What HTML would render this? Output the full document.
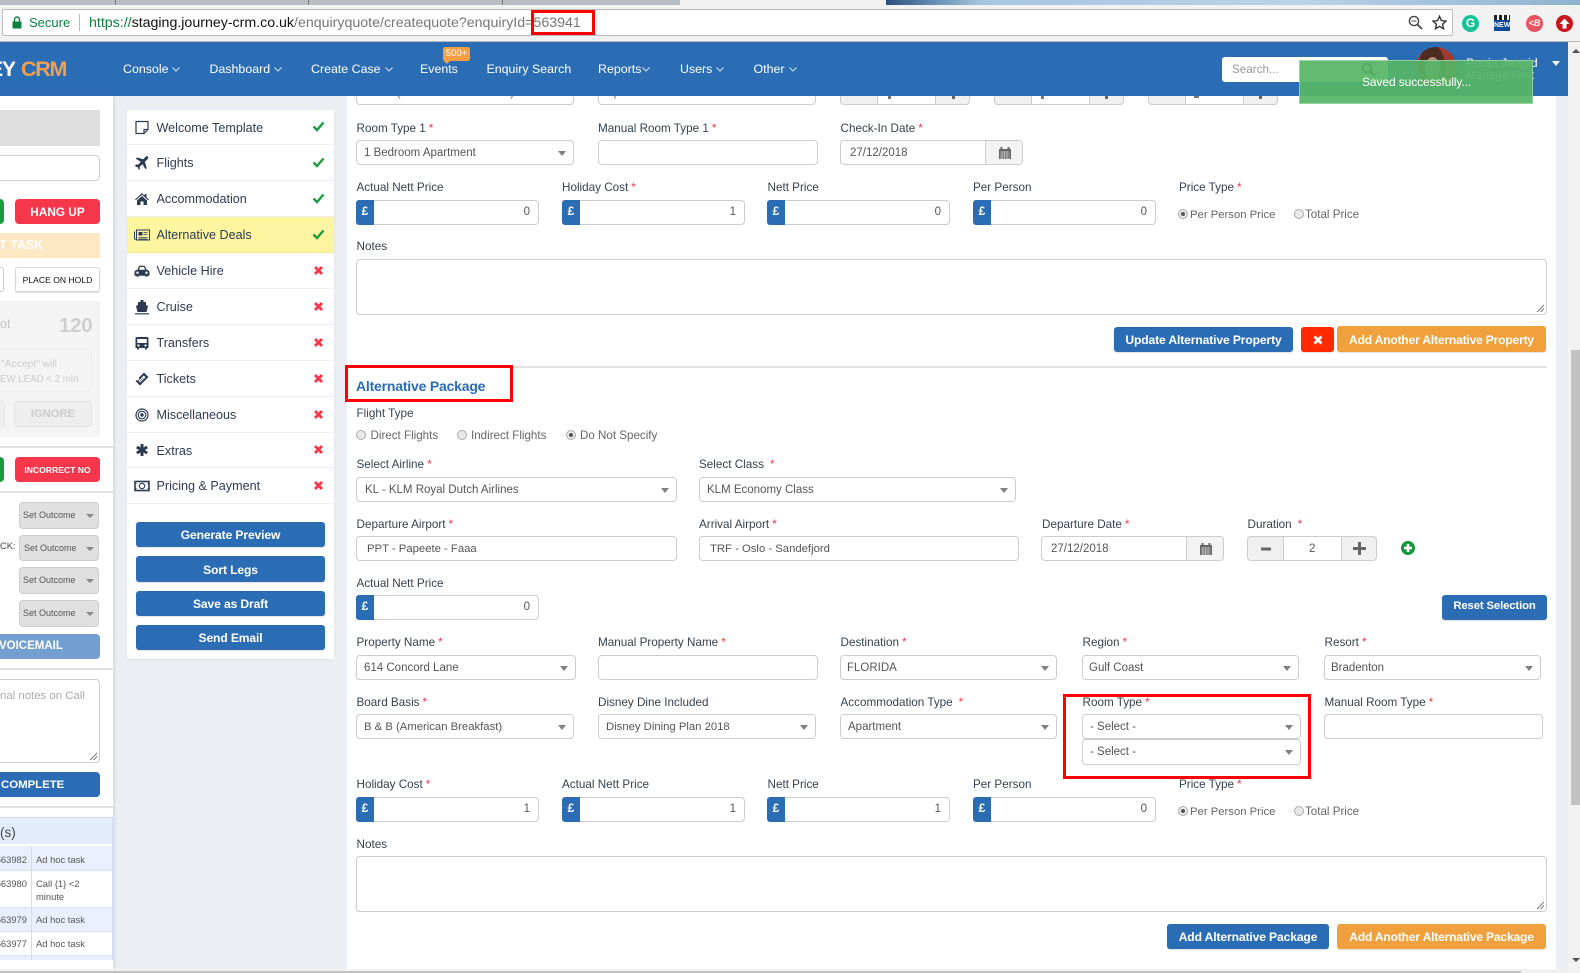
<!DOCTYPE html>
<html><head><meta charset="utf-8"><title>Journey CRM</title>
<style>
html,body{margin:0;padding:0}
body{width:1580px;height:973px;overflow:hidden;position:relative;background:#ebeef3;font-family:"Liberation Sans",sans-serif;color:#3c4858}
div,span,b,u,svg{box-sizing:border-box}
.a{position:absolute;white-space:nowrap}
.l{position:absolute;white-space:nowrap;font-size:11.7px;line-height:16px;height:16px;color:#36424f;margin-top:1px}
.l i{color:#f4364c;font-style:normal;margin-left:3px}
.v{position:absolute;white-space:nowrap;font-size:11.6px;line-height:16px;color:#666;margin-top:1px}
.f{position:absolute;background:#fff;border:1px solid #ccc;border-radius:4px;height:25px;line-height:25px;font-size:11.5px;color:#555;white-space:nowrap;padding-left:8px}
.s:after{content:"";position:absolute;right:7px;top:10px;border:4.5px solid transparent;border-top:5px solid #808080;border-bottom:0}
.g b{position:absolute;left:-1px;top:-1px;bottom:-1px;width:18px;background:#2b6db5;border-radius:3px 0 0 3px;color:#fff;font-size:12px;text-align:center;line-height:23px}
.g span{position:absolute;right:8px;top:-1px}
.d u{position:absolute;right:0;top:0;bottom:0;width:37px;background:#f3f3f3;border-left:1px solid #ccc;border-radius:0 3px 3px 0;text-decoration:none}
.d svg{position:absolute;left:12px;top:5px}
.r{position:absolute;width:10px;height:10px;border-radius:50%;background:#e9e9e9;border:1px solid #aaa}
.r.on:after{content:"";position:absolute;left:2px;top:2px;width:4px;height:4px;border-radius:50%;background:#555}
.b{position:absolute;background:#2b6db5;color:#fff;font-weight:bold;text-align:center;border-radius:3px;font-size:12.1px;white-space:nowrap;height:25px;line-height:26px;letter-spacing:-.12px;box-shadow:0 1px 1px rgba(0,0,0,.12)}
.o{background:#f0a03c}
.rb{position:absolute;border:3px solid #f00;background:transparent}
.ta{position:absolute;background:#fff;border:1px solid #ccc;border-radius:4px}
.ta svg{position:absolute;right:1px;bottom:1px}
.n{position:absolute;color:#fff;font-size:12.4px;line-height:16px;top:61px;white-space:nowrap}
.n svg{margin-left:4px;vertical-align:1px}
.it{position:absolute;left:127px;width:207px;background:#fff;border-bottom:1px solid #eef0f3}
.it span{position:absolute;left:29.5px;top:50%;margin-top:-8.5px;line-height:18px;font-size:12.6px;color:#2d3b52;white-space:nowrap}
.it .ic{position:absolute;left:7px;top:50%;margin-top:-8px}
.it .m{position:absolute;left:185px;top:50%;margin-top:-6px}
.so{position:absolute;left:19px;width:80px;background:#e0e0e0;border:1px solid #ccc;border-radius:4px;font-size:9px;line-height:25px;color:#555;padding-left:3px}
.so:after{content:"";position:absolute;right:4px;top:11px;border:4.5px solid transparent;border-top:4.5px solid #888;border-bottom:0}
.td{position:absolute;font-size:9.4px;line-height:13px;color:#555;white-space:nowrap}
</style></head><body>

<!-- browser chrome -->
<div class="a" style="left:0;top:0;width:1580px;height:42px;background:#f2f2f2;border-bottom:1px solid #bbb"></div>
<div class="a" style="left:0;top:0;width:680px;height:5px;background:#b9bec5"></div>
<div class="a" style="left:115px;top:0;width:1px;height:5px;background:#777"></div>
<div class="a" style="left:308px;top:0;width:1px;height:5px;background:#777"></div>
<div class="a" style="left:502px;top:0;width:1px;height:5px;background:#777"></div>
<div class="a" style="left:886px;top:0;width:694px;height:5px;background:linear-gradient(90deg,#2a4f7e 0,#5f87ad 6%,#a9c6df 14%,#b9d2e6 60%,#90b2cf 100%)"></div>
<div class="a" style="left:2px;top:9px;width:1451px;height:27px;background:#fff;border:1px solid #bbb;border-radius:2px"></div>
<svg class="a" style="left:12px;top:16px" width="10" height="13" viewBox="0 0 10 13"><path d="M2.5 6V3.5a2.5 2.5 0 0 1 5 0V6" fill="none" stroke="#0b8043" stroke-width="1.4"/><rect x="0.5" y="5.5" width="9" height="7" fill="#0b8043"/></svg>
<div class="a" style="left:29px;top:15px;font-size:13px;line-height:16px;color:#0b8043">Secure</div>
<div class="a" style="left:79px;top:14px;width:1px;height:17px;background:#bbb"></div>
<div class="a" style="left:89px;top:15px;font-size:14.2px;line-height:16px;color:#777"><span style="color:#0b8043">https://</span><span style="color:#111">staging.journey-crm.co.uk</span>/enquiryquote/createquote?enquiryId=563941</div>
<div class="rb" style="left:531px;top:10px;width:64px;height:25px"></div>
<svg class="a" style="left:1408px;top:15px" width="15" height="15" viewBox="0 0 15 15"><circle cx="6" cy="6" r="4.6" fill="none" stroke="#444" stroke-width="1.4"/><path d="M9.5 9.5L14 14" stroke="#444" stroke-width="1.8"/><path d="M3.6 6h4.8" stroke="#444"/></svg>
<svg class="a" style="left:1432px;top:15px" width="15" height="15" viewBox="0 0 24 24"><path d="M12 2l3 7 7.5.7-5.7 5 1.7 7.3L12 18.2 5.500 22l1.700-7.300-5.700-5L9 9z" fill="none" stroke="#333" stroke-width="2.200"/></svg>
<div class="a" style="left:1462px;top:15px;width:17px;height:17px;border-radius:50%;background:#15c39a;color:#fff;font-size:12px;font-weight:bold;line-height:17px;text-align:center">G</div>
<div class="a" style="left:1494px;top:15px;width:16px;height:16px;background:#0d4a9c;color:#fff;font-size:7px;font-weight:bold;line-height:22px;text-align:center">NEW</div>
<div class="a" style="left:1494px;top:15px;width:16px;height:5px;background:repeating-linear-gradient(90deg,#222 0 3px,#fff 3px 5px)"></div>
<div class="a" style="left:1526px;top:15px;width:17px;height:17px;border-radius:50%;background:#e85462;color:#fff;font-size:9px;font-style:italic;font-weight:bold;line-height:17px;text-align:center">&lt;B</div>
<div class="a" style="left:1556px;top:15px;width:17px;height:17px;border-radius:50%;background:#c8161d"></div>
<svg class="a" style="left:1559px;top:18px" width="11" height="11" viewBox="0 0 11 11"><path d="M5.500 0.500L10.500 6H7.500V10.500H3.500V6H0.500z" fill="#fff"/></svg>

<!-- nav -->
<div class="a" style="left:0;top:42px;width:1568px;height:54px;background:#2b6db5"></div>
<div class="a" style="left:0;top:56px;width:15px;height:26px;overflow:hidden;font-size:21.5px;line-height:26px;font-weight:bold;color:#fff"><span style="position:absolute;right:0;letter-spacing:-1.2px">EY</span></div>
<div class="a" style="left:21px;top:56px;font-size:21.5px;line-height:26px;font-weight:bold;color:#f2a04d;letter-spacing:-1.3px">CRM</div>
<div class="n" style="left:123px">Console<svg width="8" height="5" viewBox="0 0 8 5"><path d="M.5.500l3.500 3.500 3.500-3.500" fill="none" stroke="#d5e2f2"/></svg></div>
<div class="n" style="left:209.500px">Dashboard<svg width="8" height="5" viewBox="0 0 8 5"><path d="M.5.500l3.500 3.500 3.500-3.500" fill="none" stroke="#d5e2f2"/></svg></div>
<div class="n" style="left:311px">Create Case<svg width="8" height="5" viewBox="0 0 8 5"><path d="M.5.500l3.500 3.500 3.500-3.500" fill="none" stroke="#d5e2f2"/></svg></div>
<div class="n" style="left:420px">Events</div>
<div class="n" style="left:486.500px">Enquiry Search</div>
<div class="n" style="left:598px">Reports<svg style="margin-left:1px" width="8" height="5" viewBox="0 0 8 5"><path d="M.5.500l3.500 3.500 3.500-3.500" fill="none" stroke="#d5e2f2"/></svg></div>
<div class="n" style="left:680px">Users<svg width="8" height="5" viewBox="0 0 8 5"><path d="M.5.500l3.500 3.500 3.500-3.500" fill="none" stroke="#d5e2f2"/></svg></div>
<div class="n" style="left:753.500px">Other<svg width="8" height="5" viewBox="0 0 8 5"><path d="M.5.500l3.500 3.500 3.500-3.500" fill="none" stroke="#d5e2f2"/></svg></div>
<div class="a" style="left:443px;top:47px;width:27px;height:14px;background:#f59f42;border-radius:2px;color:#fff;font-size:9.500px;line-height:14px;text-align:center">500+</div>
<div class="a" style="left:444px;top:61px;border:3px solid transparent;border-top:3px solid #f59f42;border-bottom:0"></div>
<div class="a" style="left:1222px;top:57px;width:166px;height:25px;background:#fff;border-radius:3px;font-size:11.700px;line-height:25px;color:#999;padding-left:10px">Search...</div>
<svg class="a" style="left:1361px;top:62px" width="15" height="15" viewBox="0 0 15 15"><circle cx="6" cy="6" r="4.500" fill="none" stroke="#444" stroke-width="2"/><path d="M9.500 9.500L14 14" stroke="#444" stroke-width="2.400"/></svg>
<div class="a" style="left:1416px;top:47px;width:40px;height:40px;border-radius:50%;overflow:hidden;background:#a2392a"><div class="a" style="left:3px;top:-2px;width:26px;height:44px;border-radius:50%;background:#4b2d22"></div><div class="a" style="left:9px;top:10px;width:15px;height:24px;border-radius:50%;background:#b58f78"></div></div>
<div class="a" style="left:1466px;top:55px;font-size:12.400px;line-height:16px;color:#fff">Pooja Jangid</div>
<div class="a" style="left:1466px;top:68px;font-size:11.700px;line-height:16px;color:#e6eef8">Management</div>
<div class="a" style="left:1552px;top:61px;border:4px solid transparent;border-top:5px solid #fff;border-bottom:0"></div>

<!-- sidebar -->
<div class="a" style="left:0;top:96px;width:113px;height:873px;background:#fff;box-shadow:2px 0 3px rgba(0,0,0,.08)"></div>
<div class="a" style="left:0;top:110px;width:100px;height:36px;background:#dedede"></div>
<div class="a" style="left:-5px;top:155px;width:105px;height:26px;background:#fff;border:1px solid #ccc;border-radius:4px"></div>
<div class="a" style="left:-5px;top:199px;width:9px;height:25px;background:#1a9c3e;border-radius:4px"></div>
<div class="a" style="left:15px;top:199px;width:85px;height:25px;background:#f6364a;border-radius:4px;color:#fff;font-weight:bold;font-size:11.8px;line-height:26px;text-align:center">HANG UP</div>
<div class="a" style="left:0;top:233px;width:100px;height:25px;background:#fde8c3;color:#fff;font-weight:bold;font-size:12.500px;line-height:25px;overflow:hidden"><span style="position:absolute;left:-1px">T TASK</span></div>
<div class="a" style="left:-5px;top:267px;width:9px;height:25px;background:#fff;border:1px solid #ccc;border-radius:3px"></div>
<div class="a" style="left:15px;top:267px;width:85px;height:25px;background:#fff;border:1px solid #d8d8d8;border-radius:3px;color:#111;font-size:8.6px;line-height:24px;text-align:center;box-shadow:0 1px 1px rgba(0,0,0,.15)">PLACE ON HOLD</div>
<div class="a" style="left:0;top:301px;width:100px;height:136px;background:#f4f4f4"></div>
<div class="a" style="left:0;top:316px;font-size:12.500px;line-height:16px;color:#c4c4c4">ot</div>
<div class="a" style="left:59px;top:313px;font-size:20.5px;font-weight:bold;line-height:26px;color:#cfcfcf;letter-spacing:-.3px">120</div>
<div class="a" style="left:-6px;top:348px;width:98px;height:44px;border:1px solid #ebebeb;border-radius:6px"></div>
<div class="a" style="left:1px;top:357px;font-size:10.300px;line-height:16px;color:#ccc">"Accept" will</div>
<div class="a" style="left:0;top:372px;width:90px;overflow:hidden;font-size:9.700px;line-height:16px;color:#ccc">EW LEAD &lt; 2 min</div>
<div class="a" style="left:-5px;top:401px;width:10px;height:26px;background:#eee;border:1px solid #e4e4e4;border-radius:3px"></div>
<div class="a" style="left:14px;top:401px;width:78px;height:26px;background:#eee;border:1px solid #e4e4e4;border-radius:3px;color:#ccc;font-size:11.2px;font-weight:bold;line-height:25px;text-align:center">IGNORE</div>
<div class="a" style="left:0;top:446px;width:113px;height:2px;background:#e2e2e2"></div>
<div class="a" style="left:-5px;top:457px;width:9px;height:25px;background:#1a9c3e;border-radius:4px"></div>
<div class="a" style="left:15px;top:457px;width:85px;height:25px;background:#f6364a;border-radius:4px;color:#fff;font-weight:bold;font-size:8.6px;line-height:26px;text-align:center">INCORRECT NO</div>
<div class="a" style="left:0;top:491px;width:113px;height:2px;background:#e2e2e2"></div>
<div class="so" style="top:502px;height:27px">Set Outcome</div>
<div class="a" style="left:0;top:538px;font-size:9.400px;line-height:16px;color:#444">CK:</div>
<div class="so" style="top:535px;height:26px;padding-left:4px;line-height:24px">Set Outcome</div>
<div class="so" style="top:567px;height:27px">Set Outcome</div>
<div class="so" style="top:600px;height:27px">Set Outcome</div>
<div class="a" style="left:0;top:634px;width:100px;height:25px;background:#739fd0;border-radius:0 4px 4px 0;color:#fff;font-weight:bold;font-size:11.5px;line-height:25px;overflow:hidden"><span style="position:absolute;left:-1px">VOICEMAIL</span></div>
<div class="a" style="left:0;top:668px;width:113px;height:2px;background:#e2e2e2"></div>
<div class="ta" style="left:-5px;top:679px;width:105px;height:84px"><svg width="9" height="9" viewBox="0 0 9 9"><path d="M1 8L8 1M4.500 8L8 4.500" stroke="#777"/></svg></div>
<div class="a" style="left:0;top:688px;font-size:11.4px;line-height:16px;color:#aaa">nal notes on Call</div>
<div class="a" style="left:0;top:772px;width:100px;height:25px;background:#2b6db5;border-radius:0 4px 4px 0;color:#fff;font-weight:bold;font-size:11.4px;line-height:26px"><span style="position:absolute;left:1px">COMPLETE</span></div>
<div class="a" style="left:0;top:806px;width:113px;height:2px;background:#e2e2e2"></div>
<div class="a" style="left:0;top:817px;width:113px;height:27px;background:#e3ecfb;border-top:1px solid #d0def5"></div>
<div class="a" style="left:0;top:824px;font-size:13.500px;line-height:18px;color:#444">(s)</div>
<div class="a" style="left:0;top:846px;width:113px;height:24px;background:#e9f0fc"></div>
<div class="a" style="left:0;top:907px;width:113px;height:24px;background:#e9f0fc"></div>
<div class="a" style="left:0;top:870px;width:113px;height:1px;background:#d6e2f6"></div>
<div class="a" style="left:0;top:907px;width:113px;height:1px;background:#d6e2f6"></div>
<div class="a" style="left:0;top:931px;width:113px;height:1px;background:#d6e2f6"></div>
<div class="a" style="left:0;top:955px;width:113px;height:5px;background:#e9f0fc;border-top:1px solid #d6e2f6"></div>
<div class="a" style="left:31px;top:846px;width:1px;height:114px;background:#d0def5"></div>
<div class="a" style="left:112px;top:817px;width:1px;height:143px;background:#d0def5"></div>
<div class="td" style="left:0;top:853px;width:27px;overflow:hidden;direction:rtl">563982</div>
<div class="td" style="left:36px;top:853px">Ad hoc task</div>
<div class="td" style="left:0;top:877px;width:27px;overflow:hidden;direction:rtl">563980</div>
<div class="td" style="left:36px;top:877px">Call {1} &lt;2</div>
<div class="td" style="left:36px;top:890px">minute</div>
<div class="td" style="left:0;top:913px;width:27px;overflow:hidden;direction:rtl">563979</div>
<div class="td" style="left:36px;top:913px">Ad hoc task</div>
<div class="td" style="left:0;top:937px;width:27px;overflow:hidden;direction:rtl">563977</div>
<div class="td" style="left:36px;top:937px">Ad hoc task</div>

<!-- wizard column -->
<div class="a" style="left:127px;top:110px;width:207px;height:549px;background:#fff;box-shadow:0 1px 2px rgba(0,0,0,.06)"></div>
<div class="it" style="top:110px;height:35px"><svg class="ic" width="16" height="16" viewBox="0 0 16 16"><path d="M2 2.500h12v8l-4 4H2z" fill="none" stroke="#2d3b52" stroke-width="1.200"/><path d="M14 10.500h-4v4" fill="none" stroke="#2d3b52" stroke-width="1.200"/></svg><span>Welcome Template</span><svg class="m" width="13" height="11" viewBox="0 0 13 11"><path d="M1.500 5.500L5 9l6.500-7.500" fill="none" stroke="#1a9c3e" stroke-width="2.400"/></svg></div>
<div class="it" style="top:145px;height:36px"><svg class="ic" width="16" height="16" viewBox="0 0 16 16"><path d="M14.500 1.500c-1-.8-2.300-.3-3.200.6L9.200 4.300 3 2.500 1.800 3.700l5 3-2.800 3-2-.4L1 11.200l2.700 1.200L5 15l.9-1-.4-2 3-2.800 3 5 1.200-1.200-1.800-6.200 2.200-2.100c.900-.9 1.400-2.200.9-3.200z" fill="#2d3b52"/></svg><span>Flights</span><svg class="m" width="13" height="11" viewBox="0 0 13 11"><path d="M1.500 5.500L5 9l6.500-7.500" fill="none" stroke="#1a9c3e" stroke-width="2.400"/></svg></div>
<div class="it" style="top:181px;height:36px"><svg class="ic" width="16" height="16" viewBox="0 0 16 16"><path d="M8 2L1 8.500l.8.800L8 3.700l6.200 5.600.8-.8-2.500-2.300V3h-2v1.700z" fill="#2d3b52"/><path d="M3 9.500L8 5l5 4.500V14H9.500v-3.500h-3V14H3z" fill="#2d3b52"/></svg><span>Accommodation</span><svg class="m" width="13" height="11" viewBox="0 0 13 11"><path d="M1.500 5.500L5 9l6.500-7.500" fill="none" stroke="#1a9c3e" stroke-width="2.400"/></svg></div>
<div class="it" style="top:217px;height:36px;background:#fdf59f;border-bottom:1px solid #f4eb90"><svg class="ic" width="16" height="16" viewBox="0 0 16 16"><rect x="2.500" y="3" width="13" height="10" fill="none" stroke="#2d3b52"/><path d="M.5 4.500v7c0 1 2 1 2 0" fill="none" stroke="#2d3b52"/><rect x="4.500" y="5" width="4" height="3.500" fill="#2d3b52"/><path d="M4.500 10.500h9M4.500 12h9M9.500 5.500h4M9.500 7.500h4" stroke="#2d3b52" stroke-width=".8"/></svg><span>Alternative Deals</span><svg class="m" width="13" height="11" viewBox="0 0 13 11"><path d="M1.500 5.500L5 9l6.500-7.500" fill="none" stroke="#1a9c3e" stroke-width="2.400"/></svg></div>
<div class="it" style="top:253px;height:36px"><svg class="ic" width="16" height="16" viewBox="0 1 16 14.500"><path d="M3.500 7l1.300-3.300c.2-.4.600-.7 1-.7h4.400c.4 0 .8.300 1 .7L12.500 7c1.300.1 3 1 3 2.500V13h-2v1h-2v-1h-7v1h-2v-1h-2V9.500C.5 8 2.200 7.100 3.500 7z" fill="#2d3b52"/><circle cx="3.500" cy="10" r="1.200" fill="#fff"/><circle cx="12.500" cy="10" r="1.200" fill="#fff"/><path d="M5 7l.9-2.700h4.200L11 7z" fill="#fff"/></svg><span>Vehicle Hire</span><svg class="m" style="left:186px" width="11" height="11" viewBox="0 0 11 11"><path d="M2 2l7 7M9 2L2 9" fill="none" stroke="#f6364a" stroke-width="2.800"/></svg></div>
<div class="it" style="top:289px;height:36px"><svg class="ic" width="16" height="16" viewBox="0 0 16 16"><path d="M6.500 1h3v2H12v3l2 1-1.500 6h-9L2 7l2-1V3h2.500z" fill="#2d3b52"/><path d="M1 14h14v1.500H1z" fill="#5b6779"/></svg><span>Cruise</span><svg class="m" style="left:186px" width="11" height="11" viewBox="0 0 11 11"><path d="M2 2l7 7M9 2L2 9" fill="none" stroke="#f6364a" stroke-width="2.800"/></svg></div>
<div class="it" style="top:325px;height:36px"><svg class="ic" width="16" height="16" viewBox="0 0 16 16"><path d="M3 2h10c.8 0 1.500.700 1.500 1.500V13H13v1.500h-2V13H5v1.500H3V13H1.500V3.500C1.500 2.700 2.200 2 3 2z" fill="#2d3b52"/><rect x="3.200" y="4" width="9.600" height="4" fill="#fff"/><circle cx="4.500" cy="10.500" r="1.100" fill="#fff"/><circle cx="11.500" cy="10.500" r="1.100" fill="#fff"/></svg><span>Transfers</span><svg class="m" style="left:186px" width="11" height="11" viewBox="0 0 11 11"><path d="M2 2l7 7M9 2L2 9" fill="none" stroke="#f6364a" stroke-width="2.800"/></svg></div>
<div class="it" style="top:361px;height:36px"><svg class="ic" width="16" height="16" viewBox="0 0 16 16"><path d="M10 1.500l4.500 4.500L6 14.500 1.500 10l1-1c.8.500 1.600.4 2.100-.1s.6-1.300.1-2.100z" fill="#2d3b52"/><path d="M9.800 4.500l1.700 1.700-5.300 5.300-1.700-1.700z" fill="#fff"/><path d="M9 6.700l.4.400-3.200 3.200-.4-.4z" fill="#2d3b52"/></svg><span>Tickets</span><svg class="m" style="left:186px" width="11" height="11" viewBox="0 0 11 11"><path d="M2 2l7 7M9 2L2 9" fill="none" stroke="#f6364a" stroke-width="2.800"/></svg></div>
<div class="it" style="top:397px;height:36px"><svg class="ic" width="16" height="16" viewBox="0 0 16 16"><circle cx="8" cy="8" r="6" fill="none" stroke="#2d3b52" stroke-width="1.200"/><circle cx="8" cy="8" r="3.800" fill="none" stroke="#2d3b52" stroke-width="1.100"/><circle cx="8" cy="8" r="1.700" fill="#2d3b52"/></svg><span>Miscellaneous</span><svg class="m" style="left:186px" width="11" height="11" viewBox="0 0 11 11"><path d="M2 2l7 7M9 2L2 9" fill="none" stroke="#f6364a" stroke-width="2.800"/></svg></div>
<div class="it" style="top:433px;height:35px"><svg class="ic" width="16" height="16" viewBox="0 0 16 16"><path d="M8 2v12M2.800 5l10.400 6M13.200 5L2.800 11" stroke="#2d3b52" stroke-width="3"/></svg><span>Extras</span><svg class="m" style="left:186px" width="11" height="11" viewBox="0 0 11 11"><path d="M2 2l7 7M9 2L2 9" fill="none" stroke="#f6364a" stroke-width="2.800"/></svg></div>
<div class="it" style="top:468px;height:36px"><svg class="ic" width="16" height="16" viewBox="0 0 16 16"><rect x="1" y="3.500" width="14" height="9" fill="none" stroke="#2d3b52" stroke-width="1.600"/><circle cx="8" cy="8" r="2.700" fill="none" stroke="#2d3b52" stroke-width="1.100"/><path d="M1 5.500h1.500M13.500 5.500H15M1 10.500h1.500M13.500 10.500H15" stroke="#2d3b52"/></svg><span>Pricing &amp; Payment</span><svg class="m" style="left:186px" width="11" height="11" viewBox="0 0 11 11"><path d="M2 2l7 7M9 2L2 9" fill="none" stroke="#f6364a" stroke-width="2.800"/></svg></div>
<div class="b" style="left:136px;top:522px;width:189px">Generate Preview</div>
<div class="b" style="left:136px;top:556px;width:189px;height:26px;line-height:28px">Sort Legs</div>
<div class="b" style="left:136px;top:591px;width:189px">Save as Draft</div>
<div class="b" style="left:136px;top:625px;width:189px">Send Email</div>

<!-- main panel -->
<div class="a" style="left:347px;top:96px;width:1209px;height:873px;background:#fff"></div>

<!-- top row, clipped under the fixed nav -->
<div class="a" style="left:347px;top:96px;width:1209px;height:12px;overflow:hidden">
<div class="f" style="left:9px;top:-16px;width:218px"></div>
<div class="f" style="left:251px;top:-16px;width:218px"></div>
<div class="v" style="left:17px;top:-11px;margin-top:0;font-size:11.5px">B &amp; B (Continental Breakfast)</div>
<div class="v" style="left:259px;top:-11px;margin-top:0;font-size:11.5px">Apartment</div>
<div class="f" style="left:493px;top:-16px;width:130px;background:linear-gradient(90deg,#f0f0f0 0 36px,#ccc 36px 37px,#fff 37px 94px,#ccc 94px 95px,#f0f0f0 95px)"></div>
<div class="f" style="left:647px;top:-16px;width:130px;background:linear-gradient(90deg,#f0f0f0 0 36px,#ccc 36px 37px,#fff 37px 94px,#ccc 94px 95px,#f0f0f0 95px)"></div>
<div class="f" style="left:801px;top:-16px;width:130px;background:linear-gradient(90deg,#f0f0f0 0 36px,#ccc 36px 37px,#fff 37px 94px,#ccc 94px 95px,#f0f0f0 95px)"></div>
<div class="a" style="left:541px;top:0;width:3px;height:3px;background:#777"></div>
<div class="a" style="left:605px;top:0;width:3px;height:3px;background:#666"></div>
<div class="a" style="left:694px;top:0;width:3px;height:3px;background:#777"></div>
<div class="a" style="left:758px;top:0;width:3px;height:3px;background:#666"></div>
<div class="a" style="left:847px;top:0;width:5px;height:2px;background:#777"></div>
<div class="a" style="left:912px;top:0;width:3px;height:3px;background:#666"></div>
</div>

<div class="l" style="left:356.500px;top:120px">Room Type 1<i>*</i></div>
<div class="l" style="left:598px;top:120px">Manual Room Type 1<i>*</i></div>
<div class="l" style="left:840.500px;top:120px">Check-In Date<i>*</i></div>
<div class="f s" style="left:356px;top:140px;width:218px;padding-left:7px">1 Bedroom Apartment</div>
<div class="f" style="left:598px;top:140px;width:220px"></div>
<div class="f d" style="left:840px;top:140px;width:183px;padding-left:9px">27/12/2018<u><svg width="14" height="14" viewBox="0 0 14 14"><path d="M1 3h12v10H1z" fill="#666"/><path d="M3.500 1v3M10.500 1v3" stroke="#666" stroke-width="2"/><path d="M2 6h10M2 8h10M2 10h10M2 12h10M4 5v8M6.500 5v8M9 5v8" stroke="#ddd" stroke-width=".6"/></svg></u></div>

<div class="l" style="left:356.500px;top:179px">Actual Nett Price</div>
<div class="l" style="left:562px;top:179px">Holiday Cost<i>*</i></div>
<div class="l" style="left:767.500px;top:179px">Nett Price</div>
<div class="l" style="left:973px;top:179px">Per Person</div>
<div class="l" style="left:1179px;top:179px">Price Type<i>*</i></div>
<div class="f g" style="left:356px;top:200px;width:183px"><b>£</b><span>0</span></div>
<div class="f g" style="left:562px;top:200px;width:183px"><b>£</b><span>1</span></div>
<div class="f g" style="left:767px;top:200px;width:183px"><b>£</b><span>0</span></div>
<div class="f g" style="left:973px;top:200px;width:183px"><b>£</b><span>0</span></div>
<div class="r on" style="left:1178px;top:209px"></div>
<div class="v" style="left:1190px;top:206px;font-size:11.3px">Per Person Price</div>
<div class="r" style="left:1294px;top:209px"></div>
<div class="v" style="left:1305px;top:206px">Total Price</div>

<div class="l" style="left:356.500px;top:238px">Notes</div>
<div class="ta" style="left:356px;top:259px;width:1191px;height:56px"><svg width="9" height="9" viewBox="0 0 9 9"><path d="M1 8L8 1M4.500 8L8 4.500" stroke="#777"/></svg></div>
<div class="b" style="left:1114px;top:327px;width:179px">Update Alternative Property</div>
<div class="b" style="left:1301px;top:327px;width:33px;background:#ff2a00"><svg width="10" height="10" viewBox="0 0 10 10" style="vertical-align:-1px"><path d="M1.500 1.500l7 7M8.500 1.500l-7 7" stroke="#fff" stroke-width="2.800"/></svg></div>
<div class="b o" style="left:1337px;top:326px;width:209px;height:26px;line-height:28px;letter-spacing:-.2px">Add Another Alternative Property</div>

<div class="a" style="left:347px;top:366px;width:1200px;height:2px;background:#e4e4e4"></div>
<div class="rb" style="left:345px;top:365px;width:168px;height:37px"></div>
<div class="a" style="left:356px;top:377px;font-size:14px;font-weight:bold;line-height:18px;color:#2b6db5;letter-spacing:-.2px">Alternative Package</div>

<div class="l" style="left:356.500px;top:405px">Flight Type</div>
<div class="r" style="left:356px;top:430px"></div><div class="v" style="left:370.500px;top:427px">Direct Flights</div>
<div class="r" style="left:457px;top:430px"></div><div class="v" style="left:471px;top:427px">Indirect Flights</div>
<div class="r on" style="left:566px;top:430px"></div><div class="v" style="left:580px;top:427px">Do Not Specify</div>

<div class="l" style="left:356.500px;top:456px">Select Airline<i>*</i></div>
<div class="l" style="left:699px;top:456px">Select Class<i style="margin-left:6px">*</i></div>
<div class="f s" style="left:356px;top:477px;width:321px">KL - KLM Royal Dutch Airlines</div>
<div class="f s" style="left:699px;top:477px;width:317px;padding-left:7px;line-height:24px">KLM Economy Class</div>

<div class="l" style="left:356.500px;top:516px">Departure Airport<i>*</i></div>
<div class="l" style="left:699px;top:516px">Arrival Airport<i>*</i></div>
<div class="l" style="left:1042px;top:516px">Departure Date<i>*</i></div>
<div class="l" style="left:1247.500px;top:516px">Duration<i style="margin-left:6px">*</i></div>
<div class="f" style="left:356px;top:536px;width:321px;padding-left:10px;font-size:11.3px">PPT - Papeete - Faaa</div>
<div class="f" style="left:699px;top:536px;width:320px;padding-left:10px;font-size:11.3px">TRF - Oslo - Sandefjord</div>
<div class="f d" style="left:1041px;top:536px;width:183px;padding-left:9px">27/12/2018<u><svg width="14" height="14" viewBox="0 0 14 14"><path d="M1 3h12v10H1z" fill="#666"/><path d="M3.500 1v3M10.500 1v3" stroke="#666" stroke-width="2"/><path d="M2 6h10M2 8h10M2 10h10M2 12h10M4 5v8M6.500 5v8M9 5v8" stroke="#ddd" stroke-width=".6"/></svg></u></div>
<div class="f" style="left:1247px;top:536px;width:130px;padding:0;background:linear-gradient(90deg,#f0f0f0 0 35px,#ccc 35px 36px,#fff 36px 93px,#ccc 93px 94px,#f0f0f0 94px)"><svg style="position:absolute;left:12px;top:6px" width="12" height="12" viewBox="0 0 12 12"><path d="M1 4.500h10v3H1z" fill="#666"/></svg><span style="position:absolute;left:61px;top:0">2</span><svg style="position:absolute;left:105px;top:5px" width="13" height="13" viewBox="0 0 13 13"><path d="M5 0h3v5h5v3H8v5H5V8H0V5h5z" fill="#666"/></svg></div>
<svg class="a" style="left:1401px;top:541px" width="14" height="14" viewBox="0 0 14 14"><circle cx="7" cy="7" r="7" fill="#129b3b"/><path d="M5.700 3h2.600v2.700H11v2.600H8.300V11H5.700V8.300H3V5.700h2.700z" fill="#fff"/></svg>

<div class="l" style="left:356.500px;top:575px">Actual Nett Price</div>
<div class="f g" style="left:356px;top:595px;width:183px"><b>£</b><span>0</span></div>
<div class="b" style="left:1442px;top:595px;width:105px;font-size:11.3px;line-height:23px">Reset Selection</div>

<div class="l" style="left:356.500px;top:634px">Property Name<i>*</i></div>
<div class="l" style="left:598px;top:634px">Manual Property Name<i>*</i></div>
<div class="l" style="left:840.500px;top:634px">Destination<i>*</i></div>
<div class="l" style="left:1082.500px;top:634px">Region<i>*</i></div>
<div class="l" style="left:1324.500px;top:634px">Resort<i>*</i></div>
<div class="f s" style="left:356px;top:655px;width:220px;padding-left:7px">614 Concord Lane</div>
<div class="f" style="left:598px;top:655px;width:220px"></div>
<div class="f s" style="left:840px;top:655px;width:217px;padding-left:6px;line-height:24px">FLORIDA</div>
<div class="f s" style="left:1082px;top:655px;width:217px;line-height:24px;padding-left:6px">Gulf Coast</div>
<div class="f s" style="left:1324px;top:655px;width:217px;line-height:24px;padding-left:6px">Bradenton</div>

<div class="l" style="left:356.500px;top:694px">Board Basis<i>*</i></div>
<div class="l" style="left:598px;top:694px">Disney Dine Included</div>
<div class="l" style="left:840.500px;top:694px">Accommodation Type<i style="margin-left:6px">*</i></div>
<div class="l" style="left:1082.500px;top:694px">Room Type<i>*</i></div>
<div class="l" style="left:1324.500px;top:694px">Manual Room Type<i>*</i></div>
<div class="f s" style="left:356px;top:714px;width:218px;padding-left:7px;font-size:11.3px">B &amp; B (American Breakfast)</div>
<div class="f s" style="left:598px;top:714px;width:218px;padding-left:7px;font-size:11.3px">Disney Dining Plan 2018</div>
<div class="f s" style="left:840px;top:714px;width:217px;padding-left:7px">Apartment</div>
<div class="f s" style="left:1082px;top:714px;width:219px;padding-left:7px">- Select -</div>
<div class="f s" style="left:1082px;top:739px;width:219px;height:26px;padding-left:7px">- Select -</div>
<div class="f" style="left:1324px;top:714px;width:219px"></div>
<div class="rb" style="left:1063px;top:694px;width:248px;height:85px"></div>

<div class="l" style="left:356.500px;top:776px">Holiday Cost<i>*</i></div>
<div class="l" style="left:562px;top:776px">Actual Nett Price</div>
<div class="l" style="left:767.500px;top:776px">Nett Price</div>
<div class="l" style="left:973px;top:776px">Per Person</div>
<div class="l" style="left:1179px;top:776px">Price Type<i>*</i></div>
<div class="f g" style="left:356px;top:797px;width:183px"><b>£</b><span>1</span></div>
<div class="f g" style="left:562px;top:797px;width:183px"><b>£</b><span>1</span></div>
<div class="f g" style="left:767px;top:797px;width:183px"><b>£</b><span>1</span></div>
<div class="f g" style="left:973px;top:797px;width:183px"><b>£</b><span>0</span></div>
<div class="r on" style="left:1178px;top:806px"></div>
<div class="v" style="left:1190px;top:803px;font-size:11.3px">Per Person Price</div>
<div class="r" style="left:1294px;top:806px"></div>
<div class="v" style="left:1305px;top:803px">Total Price</div>

<div class="l" style="left:356.500px;top:836px">Notes</div>
<div class="ta" style="left:356px;top:856px;width:1191px;height:56px"><svg width="9" height="9" viewBox="0 0 9 9"><path d="M1 8L8 1M4.500 8L8 4.500" stroke="#777"/></svg></div>
<div class="b" style="left:1167px;top:924px;width:162px">Add Alternative Package</div>
<div class="b o" style="left:1337px;top:924px;width:209px;letter-spacing:-.2px">Add Another Alternative Package</div>

<!-- toast -->
<div class="a" style="left:1299px;top:60px;width:234px;height:44px;background:rgba(86,181,102,.92);border:1px solid rgba(190,225,195,.6);color:#fff;font-size:12px;line-height:43px;padding-left:62px;letter-spacing:-.1px">Saved successfully...</div>

<!-- scrollbars -->
<div class="a" style="left:1568px;top:42px;width:12px;height:931px;background:#f1f1f1"></div>
<div class="a" style="left:1571px;top:350px;width:9px;height:455px;background:#c1c1c1"></div>
<div class="a" style="left:1572px;top:49px;border:4px solid transparent;border-bottom:4px solid #505050;border-top:0"></div>
<div class="a" style="left:1572px;top:958px;border:4px solid transparent;border-top:4px solid #505050;border-bottom:0"></div>
<div class="a" style="left:0;top:969px;width:1568px;height:4px;background:#f1f1f1"></div>
<div class="a" style="left:0;top:971px;width:1521px;height:2px;background:#c1c1c1"></div>
</body></html>
